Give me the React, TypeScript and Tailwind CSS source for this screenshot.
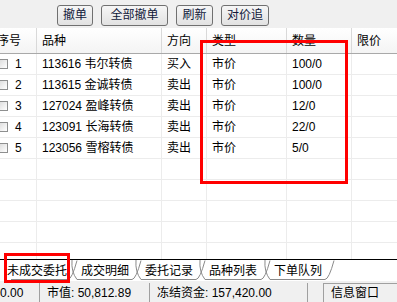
import React from 'react'

const FONT = { fontFamily: '"Liberation Sans", "Noto Sans CJK SC", sans-serif' }

const cols = [45, 125, 45, 80, 65, 60]
const headers = ['序号', '品种', '方向', '类型', '数量', '限价']

const orders = [
  { no: 1, name: '113616 韦尔转债', side: '买入', type: '市价', qty: '100/0' },
  { no: 2, name: '113615 金诚转债', side: '卖出', type: '市价', qty: '100/0' },
  { no: 3, name: '127024 盈峰转债', side: '卖出', type: '市价', qty: '12/0' },
  { no: 4, name: '123091 长海转债', side: '卖出', type: '市价', qty: '22/0' },
  { no: 5, name: '123056 雪榕转债', side: '卖出', type: '市价', qty: '5/0' },
]

const tabs = [
  { label: '未成交委托', w: 66 },
  { label: '成交明细', w: 64 },
  { label: '委托记录', w: 64 },
  { label: '品种列表', w: 65 },
  { label: '下单队列', w: 64 },
]

function Btn({ label, w }: { label: string; w: number }) {
  return (
    <div
      className="h-[21px] flex items-center justify-center rounded-[3px] border border-[#707070] bg-gradient-to-b from-[#f6f6f6] to-[#e2e2e2] text-[12px] text-[#10183a]"
      style={{ width: w }}
    >
      {label}
    </div>
  )
}

function Tab({ label, w, first }: { label: string; w: number; first?: boolean }) {
  return (
    <div className="relative h-[21px] flex items-center" style={{ width: w }}>
      <svg className="absolute left-0 top-0" width={w + 8} height={21}>
        {!first && <path d={`M1 0 Q0 12 6 19.5`} stroke="#8a8a8a" fill="none" />}
        <path d={`M6 19.5 L${w - 3} 19.5 Q${w + 1} 19 ${w + 6} 0.5`} stroke="#8a8a8a" fill="none" />
      </svg>
      <span className={`relative text-[12px] text-black ${first ? 'pl-[2px]' : 'pl-[10px]'}`}>{label}</span>
    </div>
  )
}

export default function App() {
  const empty = Array.from({ length: 6 })
  return (
    <div className="relative w-[397px] h-[302px] overflow-hidden bg-white flex flex-col" style={FONT}>
      {/* toolbar */}
      <div className="h-[28px] shrink-0 bg-[#f0f0f0] flex items-center gap-[8px] pl-[57px] pt-[2px]">
        <Btn label="撤单" w={36} />
        <Btn label="全部撤单" w={67} />
        <Btn label="刷新" w={37} />
        <Btn label="对价追" w={48} />
      </div>

      {/* table */}
      <div className="h-[231px] shrink-0 overflow-hidden ml-[-8px]">
        <div className="flex h-[26px] bg-gradient-to-b from-white to-[#f4f4f4] border-b border-[#a9a9a9]">
          {headers.map((h, i) => (
            <div
              key={h}
              className="shrink-0 flex items-center pl-[5px] text-[12px] text-black border-r border-[#d9d9d9]"
              style={{ width: cols[i] }}
            >
              {h}
            </div>
          ))}
        </div>
        {orders.map(o => (
          <div key={o.no} className="flex h-[21px] border-b border-[#ececec] text-[12px] text-black">
            <div className="shrink-0 flex items-center pl-[6px] gap-[7px] border-r border-[#ececec]" style={{ width: cols[0] }}>
              <span className="w-[10px] h-[10px] border border-[#8e8f8f] bg-gradient-to-br from-[#dcdcdc] to-white" />
              <span>{o.no}</span>
            </div>
            <div className="shrink-0 flex items-center pl-[5px] border-r border-[#ececec]" style={{ width: cols[1] }}>{o.name}</div>
            <div className="shrink-0 flex items-center pl-[5px] border-r border-[#ececec]" style={{ width: cols[2] }}>{o.side}</div>
            <div className="shrink-0 flex items-center pl-[5px] border-r border-[#ececec]" style={{ width: cols[3] }}>{o.type}</div>
            <div className="shrink-0 flex items-center pl-[5px] border-r border-[#ececec]" style={{ width: cols[4] }}>{o.qty}</div>
            <div className="shrink-0 border-r border-[#ececec]" style={{ width: cols[5] }} />
          </div>
        ))}
        {empty.map((_, r) => (
          <div key={r} className="flex h-[21px] border-b border-[#ececec]">
            {cols.map((w, i) => (
              <div key={i} className="shrink-0 border-r border-[#ececec]" style={{ width: w }} />
            ))}
          </div>
        ))}
      </div>

      {/* sheet tabs */}
      <div className="h-[22px] shrink-0 border-t border-black bg-white flex pl-[5px]">
        {tabs.map((t, i) => (
          <Tab key={t.label} label={t.label} w={t.w} first={i === 0} />
        ))}
      </div>

      {/* status bar */}
      <div className="flex-1 bg-[#f0f0f0] flex items-end text-[12px] text-black">
        <div className="h-[19px] w-[40px] flex items-center border-r border-[#a0a0a0]">0.00</div>
        <div className="h-[19px] w-[110px] flex items-center pl-[7px] border-r border-[#a0a0a0]">市值: 50,812.89</div>
        <div className="h-[19px] w-[158px] flex items-center pl-[7px] border-r border-[#a0a0a0]">冻结资金: 157,420.00</div>
        <div className="h-[19px] ml-[15px] flex-1 flex items-center pl-[7px] border-l border-t border-[#a0a0a0]">信息窗口</div>
      </div>

      {/* annotation boxes */}
      <div className="absolute left-[200px] top-[40px] w-[148px] h-[144px] border-[3px] border-[#ff0000]" />
      <div className="absolute left-[4px] top-[253px] w-[66px] h-[30px] border-[3px] border-[#ff0000]" />
    </div>
  )
}
